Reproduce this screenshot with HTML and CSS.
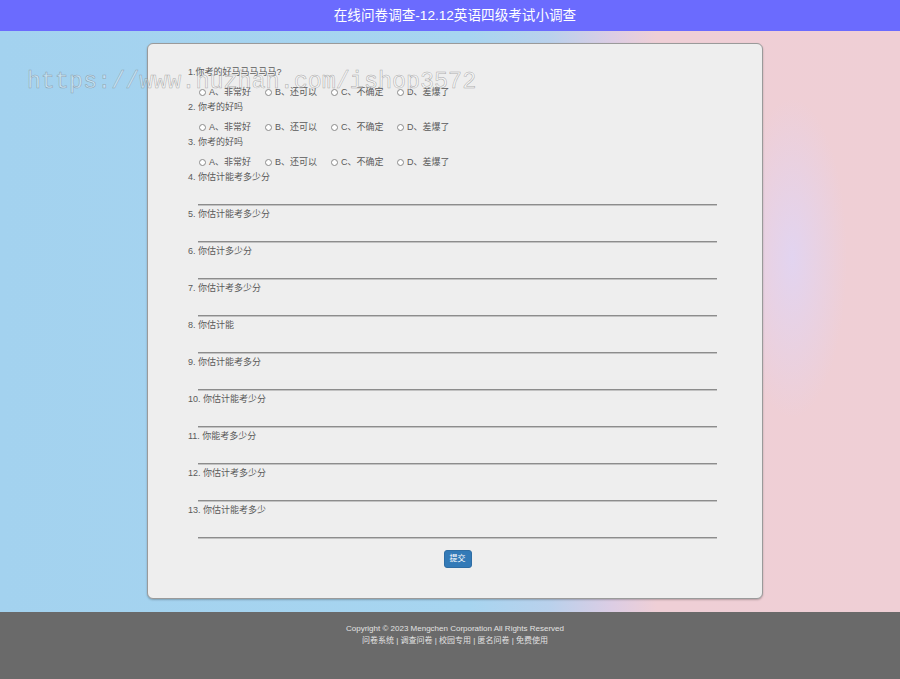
FILE: index.html
```html
<!DOCTYPE html>
<html lang="zh-CN">
	<head>
		<meta charset="UTF-8" />
		<meta name="viewport" content="width=device-width, initial-scale=1.0" />
		<title>在线问卷调查</title>
		<link rel="stylesheet" href="styles.css">
	</head>
	<body>
		<!-- Title bar -->
		<header class="top-bar">在线问卷调查-12.12英语四级考试小调查</header>

		<main class="page">
			<form class="survey" onsubmit="return false">
				<!-- Choice questions -->
				<div class="question">
					<div class="q-title">1.你考的好马马马马马?</div>
					<div class="options">
						<label class="opt"><input type="radio" name="q1" />A、非常好</label>
						<label class="opt"><input type="radio" name="q1" />B、还可以</label>
						<label class="opt"><input type="radio" name="q1" />C、不确定</label>
						<label class="opt"><input type="radio" name="q1" />D、差爆了</label>
					</div>
				</div>
				<div class="question">
					<div class="q-title">2. 你考的好吗</div>
					<div class="options">
						<label class="opt"><input type="radio" name="q2" />A、非常好</label>
						<label class="opt"><input type="radio" name="q2" />B、还可以</label>
						<label class="opt"><input type="radio" name="q2" />C、不确定</label>
						<label class="opt"><input type="radio" name="q2" />D、差爆了</label>
					</div>
				</div>
				<div class="question">
					<div class="q-title">3. 你考的好吗</div>
					<div class="options">
						<label class="opt"><input type="radio" name="q3" />A、非常好</label>
						<label class="opt"><input type="radio" name="q3" />B、还可以</label>
						<label class="opt"><input type="radio" name="q3" />C、不确定</label>
						<label class="opt"><input type="radio" name="q3" />D、差爆了</label>
					</div>
				</div>

				<!-- Fill-in questions -->
				<div class="question text-q">
					<div class="q-title">4. 你估计能考多少分</div>
					<input class="answer" type="text" />
				</div>
				<div class="question text-q">
					<div class="q-title">5. 你估计能考多少分</div>
					<input class="answer" type="text" />
				</div>
				<div class="question text-q">
					<div class="q-title">6. 你估计多少分</div>
					<input class="answer" type="text" />
				</div>
				<div class="question text-q">
					<div class="q-title">7. 你估计考多少分</div>
					<input class="answer" type="text" />
				</div>
				<div class="question text-q">
					<div class="q-title">8. 你估计能</div>
					<input class="answer" type="text" />
				</div>
				<div class="question text-q">
					<div class="q-title">9. 你估计能考多分</div>
					<input class="answer" type="text" />
				</div>
				<div class="question text-q">
					<div class="q-title">10. 你估计能考少分</div>
					<input class="answer" type="text" />
				</div>
				<div class="question text-q">
					<div class="q-title">11. 你能考多少分</div>
					<input class="answer" type="text" />
				</div>
				<div class="question text-q">
					<div class="q-title">12. 你估计考多少分</div>
					<input class="answer" type="text" />
				</div>
				<div class="question text-q">
					<div class="q-title">13. 你估计能考多少</div>
					<input class="answer" type="text" />
				</div>

				<div class="actions">
					<button class="btn-submit" type="submit">提交</button>
				</div>
			</form>
		</main>

		<footer class="footer">
			<p>Copyright © 2023 Mengchen Corporation All Rights Reserved</p>
			<p>问卷系统 | 调查问卷 | 校园专用 | 匿名问卷 | 免费使用</p>
		</footer>

		<div class="mark">https://www.huzhan.com/ishop3572</div>
	</body>
</html>
```

FILE: styles.css
```css
html,
body {
	margin: 0;
	padding: 0;
}

body {
	font-family: "Liberation Sans", "Noto Sans CJK SC", sans-serif;
	color: #5a5a5a;
	width: 900px;
	min-height: 679px;
	background:
		radial-gradient(ellipse 55px 160px at 88% 38%, rgba(226, 212, 240, 1), rgba(226, 212, 240, 0) 100%),
		linear-gradient(90deg, #a3d2ef 0%, #a7d5f0 52%, #b9d1ec 61%, #dccde4 68%, #efcfd6 73%, #efcfd5 100%);
}

.top-bar {
	height: 31px;
	line-height: 31px;
	padding-left: 10px;
	background: #6b6bfe;
	color: #fff;
	font-size: 13.6px;
	text-align: center;
}

.page {
	padding: 12px 0 13px 10px;
}

.survey {
	width: 529px;
	margin: 0 auto;
	padding: 21px 45px 30px 40px;
	background: #eeeeee;
	border: 1px solid #9a9a9a;
	border-radius: 6px;
	box-shadow: 0 1px 2px rgba(0, 0, 0, 0.25);
}

.q-title {
	font-size: 9px;
	line-height: 15px;
	height: 15px;
	white-space: nowrap;
}

.options {
	display: grid;
	grid-template-columns: repeat(4, 66px);
	margin: 5px 0 0 10px;
	height: 15px;
}

.opt {
	display: flex;
	align-items: center;
	font-size: 9px;
	line-height: 15px;
	white-space: nowrap;
}

.opt input {
	appearance: none;
	-webkit-appearance: none;
	width: 7px;
	height: 7px;
	margin: 0 3px 0 1px;
	border: 1px solid #8a8a8a;
	border-radius: 50%;
	background: #fff;
}

.text-q {
	margin-bottom: 2px;
}

.answer {
	display: block;
	box-sizing: border-box;
	width: 519px;
	height: 20px;
	margin: 0 0 0 10px;
	padding: 0;
	border: none;
	border-bottom: 1px solid #8c8c8c;
	box-shadow: 0 1px 0 #c2c2c2;
	background: transparent;
	outline: none;
}

.actions {
	margin: 9px 0 0 10px;
	text-align: center;
}

.btn-submit {
	height: 18px;
	padding: 0 5px;
	background: #337ab7;
	border: 1px solid #2e6da4;
	border-radius: 3px;
	color: #fff;
	font-family: "Liberation Sans", "Noto Sans CJK SC", sans-serif;
	font-size: 8px;
	line-height: 16px;
}

.footer {
	height: 56px;
	padding: 11px 0 0 10px;
	background: #6a6a6a;
	color: #e2e2e2;
	text-align: center;
	font-size: 8px;
	line-height: 12px;
}

.footer p {
	margin: 0;
}

/* site mark laid over the top of the page */
.mark {
	position: absolute;
	left: 27px;
	top: 68px;
	font-family: "Liberation Mono", monospace;
	font-size: 23.4px;
	line-height: 28px;
	color: rgba(255, 255, 255, 0.35);
	-webkit-text-stroke: 0.5px rgba(115, 115, 115, 0.6);
	pointer-events: none;
	white-space: nowrap;
}
```
